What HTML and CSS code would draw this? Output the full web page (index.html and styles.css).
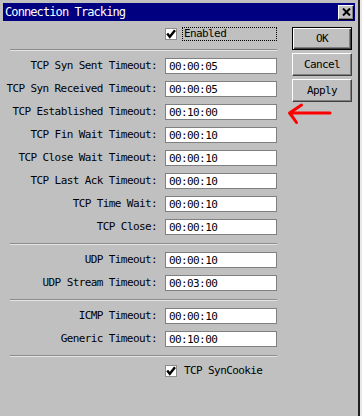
FILE: index.html
```html
<!DOCTYPE html>
<html lang="en">
<head>
  <meta charset="UTF-8">
  <title>Connection Tracking</title>
  <link rel="stylesheet" href="styles.css">
</head>
<body>
  <div class="window">
    <div class="titlebar">
      <span class="title">Connection Tracking</span>
      <span class="close">
        <svg width="9" height="8" viewBox="0 0 9 8"><path d="M1 0.5 L8 7.5 M8 0.5 L1 7.5" stroke="#000" stroke-width="2" fill="none"/></svg>
      </span>
    </div>

    <div class="content">
      <div class="form">
        <div class="grid">
          <span></span>
          <label class="check">
            <span class="box"><svg width="10" height="10" viewBox="0 0 10 10"><path d="M1.2 4.6 L3.8 7.8 L9 1.2" stroke="#000" stroke-width="2.4" fill="none"/></svg></span>
            <span class="caption focus">Enabled</span>
          </label>
        </div>
        <div class="sep"></div>

        <div class="grid">
          <span class="label">TCP Syn Sent Timeout:</span>
          <input class="field" type="text" value="00:00:05">
          <span class="label">TCP Syn Received Timeout:</span>
          <input class="field" type="text" value="00:00:05">
          <span class="label">TCP Established Timeout:</span>
          <input class="field" type="text" value="00:10:00">
          <span class="label">TCP Fin Wait Timeout:</span>
          <input class="field" type="text" value="00:00:10">
          <span class="label">TCP Close Wait Timeout:</span>
          <input class="field" type="text" value="00:00:10">
          <span class="label">TCP Last Ack Timeout:</span>
          <input class="field" type="text" value="00:00:10">
          <span class="label">TCP Time Wait:</span>
          <input class="field" type="text" value="00:00:10">
          <span class="label">TCP Close:</span>
          <input class="field" type="text" value="00:00:10">
        </div>
        <div class="sep"></div>

        <div class="grid">
          <span class="label">UDP Timeout:</span>
          <input class="field" type="text" value="00:00:10">
          <span class="label">UDP Stream Timeout:</span>
          <input class="field" type="text" value="00:03:00">
        </div>
        <div class="sep"></div>

        <div class="grid">
          <span class="label">ICMP Timeout:</span>
          <input class="field" type="text" value="00:00:10">
          <span class="label">Generic Timeout:</span>
          <input class="field" type="text" value="00:10:00">
        </div>
        <div class="sep"></div>

        <div class="grid">
          <span></span>
          <label class="check">
            <span class="box"><svg width="10" height="10" viewBox="0 0 10 10"><path d="M1.2 4.6 L3.8 7.8 L9 1.2" stroke="#000" stroke-width="2.4" fill="none"/></svg></span>
            <span class="caption">TCP SynCookie</span>
          </label>
        </div>
      </div>

      <div class="buttons">
        <button class="btn default">OK</button>
        <button class="btn">Cancel</button>
        <button class="btn">Apply</button>
      </div>
    </div>

    <!-- red hand-drawn arrow pointing at the established timeout -->
    <svg class="arrow" width="48" height="24" viewBox="0 0 48 24">
      <path d="M44 11 L4 11 M15.5 3 Q8 8 3.5 11 Q6.5 14.5 10.5 20.5" stroke="#ff0000" stroke-width="3" stroke-linecap="round" stroke-linejoin="round" fill="none"/>
    </svg>
  </div>
</body>
</html>
```

FILE: styles.css
```css
body {
  margin: 0;
  background-color: #e8e8e8;
  font-family: "DejaVu Sans Mono", "Liberation Mono", monospace;
  font-size: 11px;
  letter-spacing: -0.6px;
  color: #000;
}
.window {
  position: relative;
  width: 360px;
  height: 416px;
  box-sizing: border-box;
  padding: 3px 3px 0 3px;
  background-color: #c0c0c0;
  border-right: 2px solid #202020;
}
.titlebar {
  height: 18px;
  display: flex;
  align-items: center;
  justify-content: space-between;
  padding: 0 1px 0 2px;
  background-color: #000080;
  color: #fff;
}
.title {
  font-size: 12px;
  letter-spacing: -0.9px;
  line-height: 18px;
}
.close {
  width: 16px;
  height: 15px;
  box-sizing: border-box;
  display: flex;
  align-items: center;
  justify-content: center;
  background-color: #c0c0c0;
  border: 1px solid;
  border-color: #fff #000 #000 #fff;
  box-shadow: inset -1px -1px #808080;
}
.content {
  display: flex;
  align-items: flex-start;
  padding-top: 6px;
}
.form {
  width: 274px;
}
.grid {
  display: grid;
  grid-template-columns: 154px 112px;
  column-gap: 8px;
  row-gap: 7px;
}
.label {
  text-align: right;
  line-height: 16px;
  white-space: nowrap;
}
.field {
  width: 112px;
  height: 16px;
  box-sizing: border-box;
  margin: 0;
  padding: 0 3px;
  border: 1px solid #808080;
  background-color: #fff;
  font: inherit;
  letter-spacing: inherit;
  line-height: 14px;
  color: #000;
  outline: none;
}
.sep {
  margin: 8px 0 7px 7px;
  border-top: 1px solid #8c8c8c;
  border-bottom: 1px solid #e4e4e4;
}
.check {
  display: flex;
  align-items: center;
  height: 14px;
}
.box {
  width: 12px;
  height: 12px;
  box-sizing: border-box;
  display: flex;
  align-items: center;
  justify-content: center;
  border: 1px solid #8c8c8c;
  background-color: #fff;
  flex: none;
}
.caption {
  margin-left: 5px;
  padding-left: 1px;
  line-height: 12px;
  border: 1px solid transparent;
}
.caption.focus {
  flex: 1;
  border: 1px dotted #000;
}
.buttons {
  display: flex;
  flex-direction: column;
  gap: 3px;
  margin-left: 15px;
  width: 60px;
}
.btn {
  height: 23px;
  margin: 0;
  padding: 0;
  box-sizing: border-box;
  background-color: #c0c0c0;
  border: 1px solid;
  border-color: #fff #404040 #404040 #fff;
  box-shadow: inset -1px -1px #808080;
  font: inherit;
  letter-spacing: inherit;
  color: #000;
}
.btn.default {
  border: 1px solid #000;
  box-shadow: inset 1px 1px #fff, inset -1px -1px #404040, inset -2px -2px #808080;
}
.arrow {
  position: absolute;
  left: 286px;
  top: 102px;
}
```
